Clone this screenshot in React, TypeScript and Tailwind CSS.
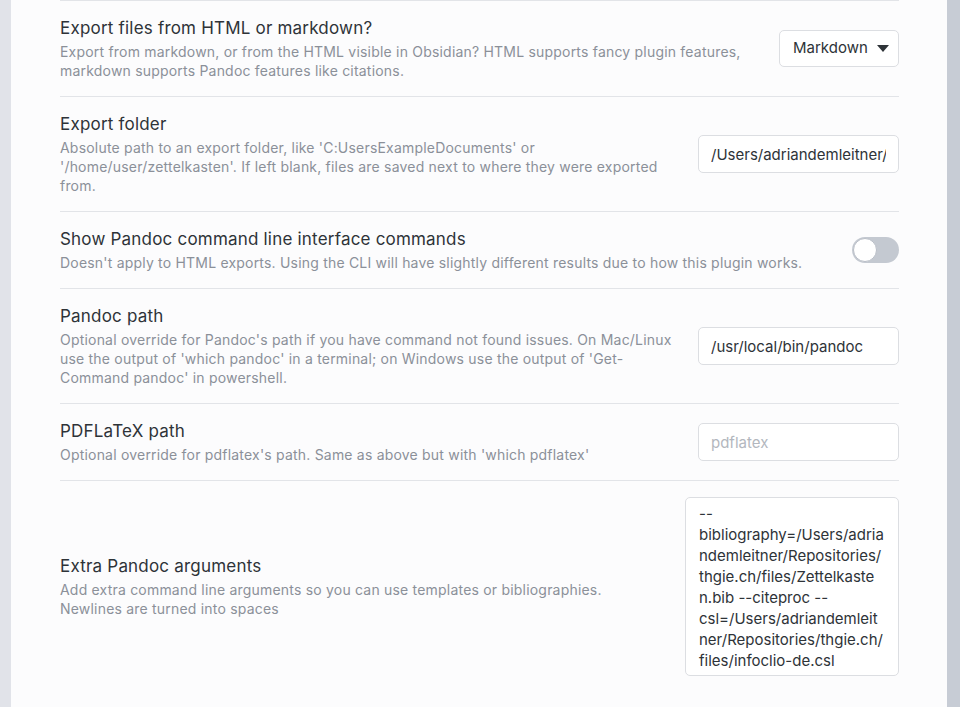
import React from "react";

const font = { fontFamily: "Inter, 'Noto Sans', sans-serif" };

function Info({ name, children }: { name: string; children: React.ReactNode }) {
  return (
    <div className="flex-1 mr-4">
      <div className="text-[17px] leading-[22px] tracking-[0.2px] text-[#2e3338]">{name}</div>
      <div className="mt-[3px] text-[14px] leading-[19px] tracking-[0.2px] text-[#8b9099]">{children}</div>
    </div>
  );
}

function Row({ children }: { children: React.ReactNode }) {
  return <div className="flex items-center py-4 border-t border-[#e2e4e8]">{children}</div>;
}

function TextInput({ value, placeholder }: { value?: string; placeholder?: string }) {
  return (
    <input
      readOnly
      value={value}
      placeholder={placeholder}
      className="w-[201px] h-[38px] px-3 rounded-[5px] border border-[#dcdee2] bg-white text-[15px] text-[#2e3338] placeholder:text-[#b3b7be] outline-none"
      style={font}
    />
  );
}

// wrapped the way the narrow textarea wraps it in Obsidian
const argLines = [
  "--",
  "bibliography=/Users/adria",
  "ndemleitner/Repositories/",
  "thgie.ch/files/Zettelkaste",
  "n.bib --citeproc --",
  "csl=/Users/adriandemleit",
  "ner/Repositories/thgie.ch/",
  "files/infoclio-de.csl",
];

export default function App() {
  return (
    <div className="flex h-[707px] w-[960px] overflow-hidden bg-[#fcfcfd]" style={font}>
      <div className="w-[11px] shrink-0 bg-[#e1e3e9]" />
      <main className="flex-1 pl-[49px] pr-[48px]">
        <Row>
          <Info name="Export files from HTML or markdown?">
            Export from markdown, or from the HTML visible in Obsidian? HTML supports fancy plugin features,
            markdown supports Pandoc features like citations.
          </Info>
          <button className="flex items-center gap-[9px] w-[120px] h-[37px] pl-[13px] rounded-[5px] border border-[#dcdee2] bg-white text-[15px] text-[#2e3338]">
            Markdown
            <svg width="12" height="7" viewBox="0 0 12 7">
              <path d="M0 0h12L6 7z" fill="#2e3338" />
            </svg>
          </button>
        </Row>
        <Row>
          <Info name="Export folder">
            Absolute path to an export folder, like 'C:UsersExampleDocuments' or '/home/user/zettelkasten'. If left
            blank, files are saved next to where they were exported from.
          </Info>
          <TextInput value="/Users/adriandemleitner/Documents/Exports" />
        </Row>
        <Row>
          <Info name="Show Pandoc command line interface commands">
            Doesn't apply to HTML exports. Using the CLI will have slightly different results due to how this plugin
            works.
          </Info>
          <div className="flex items-center w-[47px] h-[26px] rounded-full bg-[#c4c9d1] p-[1px]">
            <div className="w-[24px] h-[24px] rounded-full bg-white border border-[#b9bec7]" />
          </div>
        </Row>
        <Row>
          <Info name="Pandoc path">
            Optional override for Pandoc's path if you have command not found issues. On Mac/Linux use the output of
            'which pandoc' in a terminal; on Windows use the output of 'Get-Command pandoc' in powershell.
          </Info>
          <TextInput value="/usr/local/bin/pandoc" />
        </Row>
        <Row>
          <Info name="PDFLaTeX path">Optional override for pdflatex's path. Same as above but with 'which pdflatex'</Info>
          <TextInput placeholder="pdflatex" />
        </Row>
        <Row>
          <Info name="Extra Pandoc arguments">
            Add extra command line arguments so you can use templates or bibliographies.
            <br />
            Newlines are turned into spaces
          </Info>
          <textarea
            readOnly
            wrap="off"
            value={argLines.join("\n")}
            className="w-[214px] h-[179px] pl-[13px] pr-[14px] pt-[5px] pb-0 rounded-[5px] border border-[#dcdee2] bg-white text-[15px] leading-[21px] text-[#2e3338] resize-none outline-none overflow-hidden"
            style={font}
          />
        </Row>
      </main>
      <div className="w-[13px] shrink-0 bg-[#c7ccd5]" />
    </div>
  );
}
